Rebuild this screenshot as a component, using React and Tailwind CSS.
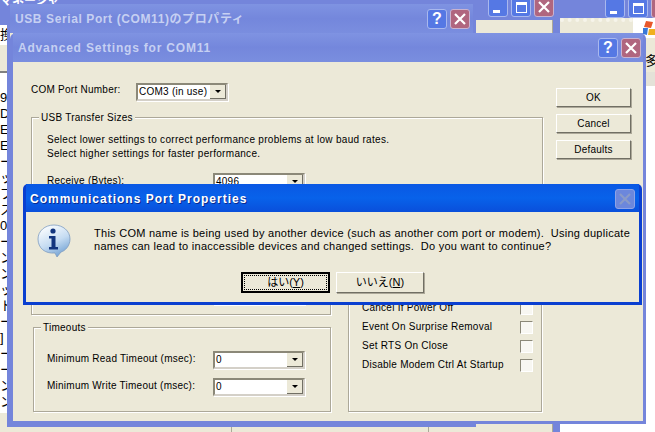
import React from "react";

const font = { fontFamily: '"Liberation Sans", "Noto Sans CJK JP", sans-serif' };

// xp style caption button
const CapButton = ({ kind, inactive }) => {
  const tone =
    kind === "close"
      ? "bg-[#b0667f] border-[#c9b3d0]"
      : "bg-[#5578e4] border-[#a9b8ee]";
  return (
    <div className={`w-[20px] h-[20px] rounded-[3px] border flex items-center justify-center shrink-0 ${inactive ? "bg-[#6c87dc] border-[#8fa3e6]" : tone}`}>
      {kind === "help" && <span className="text-white text-[16px] font-bold leading-none">?</span>}
      {kind === "close" && (
        <svg width="12" height="12" viewBox="0 0 12 12">
          <path d="M1 1 L11 11 M11 1 L1 11" stroke={inactive ? "#8a9bc8" : "#fff"} strokeWidth="2.2" />
        </svg>
      )}
      {kind === "min" && <div className="w-[7px] h-[3px] bg-white mt-[8px] mr-[4px]" />}
      {kind === "max" && <div className="w-[11px] h-[11px] border border-white border-t-[3px]" />}
    </div>
  );
};

const Select = ({ value, className = "w-[92px]" }) => (
  <div className={`h-[18px] flex bg-white border-2 border-t-[#8b8878] border-l-[#8b8878] border-r-[#d4d0c8] border-b-[#d4d0c8] shadow-[1px_1px_0_#fff] ${className}`}>
    <div className="flex-1 text-[10px] leading-[14px] pl-[1px] text-black overflow-hidden whitespace-nowrap tracking-[0.25px]">{value}</div>
    <div className="w-[16px] bg-[#ece9d8] border-r border-b border-[#716f64] flex items-center justify-center">
      <div className="w-0 h-0 border-x-[3px] border-x-transparent border-t-[3px] border-t-black" />
    </div>
  </div>
);

const Group = ({ label, className = "", children }) => (
  <div className={`relative border border-[#aca899] shadow-[inset_1px_1px_0_#fff,1px_1px_0_#fff] ${className}`}>
    {label && (
      <span className="absolute left-[7px] -top-[7px] bg-[#ece9d8] px-[2px] text-[10px] leading-[13px] tracking-[0.25px] whitespace-nowrap">
        {label}
      </span>
    )}
    {children}
  </div>
);

const SideButton = ({ children }) => (
  <div className="w-[75px] h-[19px] bg-[#ece9d8] border border-t-white border-l-white border-r-[#716f64] border-b-[#716f64] shadow-[1px_1px_0_#aca899] flex items-center justify-center text-[10px] tracking-[0.25px]">
    {children}
  </div>
);

const CheckRow = ({ label }) => (
  <div className="flex items-center justify-between h-[13px]">
    <span className="text-[10px] leading-[13px] mb-[3px] tracking-[0.25px] whitespace-nowrap">{label}</span>
    <div className="w-[13px] h-[13px] bg-[#f8f7f2] border border-t-[#8b8878] border-l-[#8b8878] border-r-white border-b-white" />
  </div>
);

const InfoIcon = () => (
  <svg width="34" height="34" viewBox="0 0 34 34" className="shrink-0">
    <defs>
      <linearGradient id="bub" x1="0.2" y1="0" x2="0.7" y2="1">
        <stop offset="0" stopColor="#ffffff" />
        <stop offset="0.55" stopColor="#c5dcf2" />
        <stop offset="1" stopColor="#6f9fd2" />
      </linearGradient>
    </defs>
    <path d="M17 1 C26 1 33 7 33 15 C33 22 28 27 24 28 L20 33 L18 29 C8 30 1 24 1 15 C1 7 8 1 17 1 Z" fill="url(#bub)" stroke="#7e9cc0" strokeWidth="0.8" />
    <circle cx="16" cy="7" r="2.6" fill="#12357e" />
    <path d="M12 12 H18.5 V23 H21 V25.5 H12 V23 H14.5 V14.5 H12 Z" fill="#12357e" />
  </svg>
);

// window that sits behind everything at the top of the desktop
const BackWindow = () => (
  <div className="absolute left-0 top-0 w-[560px] h-[432px] bg-[#7485db] flex flex-col overflow-hidden">
    <div className="h-[17px] shrink-0 flex justify-end gap-[3px] pr-[6px] items-end overflow-hidden relative">
      <span className="absolute left-0 -top-[8px] text-[12px] font-bold text-white whitespace-nowrap">マネージャ</span>
      <CapButton kind="min" />
      <CapButton kind="max" />
      <CapButton kind="close" />
    </div>
    <div className="h-[3px] shrink-0 bg-[#7485db]" />
    <div className="flex-1 mr-[7px] bg-[#ece9d8] border-r border-[#aca899] flex flex-col">
      <div className="h-[5px] w-[7px] bg-[#7485db]" />
      <div className="h-[20px] w-[7px] bg-white text-[13px] leading-[20px] text-black overflow-hidden">換</div>
      <div className="h-[28px] w-[7px] border-b-2 border-[#808080]" />
      <div className="h-[340px] w-[7px] bg-white text-[13px] leading-[16px] text-black overflow-hidden whitespace-nowrap pt-[17px]">
        {["9", "D", "E", "E", "ー", "ッ", "ブ", "ス", "0", "ー", "ン", "ン", "ッ", "ト", "ー", "]", "ー", "ー", "ン", "ン"].map((c, i) => (
          <div key={i}>{c}</div>
        ))}
      </div>
      <div className="flex-1 mt-[12px] flex">
        <div className="w-[232px] border-r border-[#aca899]" />
        <div className="w-[197px] border-r border-[#aca899]" />
      </div>
    </div>
  </div>
);

const RightWindow = () => (
  <div className="absolute left-[560px] top-0 w-[95px] h-[432px] bg-white flex flex-col overflow-hidden">
    <div className="h-[18px] shrink-0 bg-[#7485db] flex gap-[3px] pl-[45px] items-end">
      <CapButton kind="min" />
      <CapButton kind="max" />
      <CapButton kind="close" />
    </div>
    <div className="h-[20px] flex">
      <div className="w-[75px] bg-[#ece9d8] border-t-4 border-dotted border-[#f6f4ea]" />
      <div className="flex-1 bg-white pl-[10px] pt-[2px]">
        <svg width="12" height="16" viewBox="0 0 12 16">
          <path d="M3 1 L10 2 L8 8 L1 7 Z" fill="#e8572a" />
          <path d="M0 8 L5 8 L4 15 L0 14 Z" fill="#3a78d8" />
          <path d="M6 9 L12 9 L12 15 L5 15 Z" fill="#f0b020" />
        </svg>
      </div>
    </div>
    <div className="h-[14px] bg-[#ece9d8]" />
    <div className="h-[20px] bg-[#ece9d8] pl-[85px] text-[13px] leading-[18px] whitespace-nowrap overflow-hidden">多</div>
    <div className="h-[14px] bg-[#e4e2d8]" />
  </div>
);

const UsbWindow = () => (
  <div className="absolute left-[7px] top-[4px] w-[469px] h-[423px] rounded-t-[6px] bg-[#7485db] flex flex-col px-[3px] pb-[3px]">
    <div className="h-[29px] shrink-0 flex items-center justify-between pr-[3px] bg-gradient-to-b from-[#7f93e2] via-[#7487dc] to-[#7a8edf]">
      <span className="text-[#c6d0f2] font-bold text-[12px] tracking-[0.6px] pl-[5px] whitespace-nowrap">
        USB Serial Port (COM11)のプロパティ
      </span>
      <div className="flex gap-[3px]">
        <CapButton kind="help" />
        <CapButton kind="close" />
      </div>
    </div>
    <div className="flex-1 bg-[#ece9d8]" />
  </div>
);

const AdvancedWindow = () => (
  <div className="absolute left-[10px] top-[33px] w-[636px] h-[391px] rounded-t-[6px] bg-[#7485db] flex flex-col px-[3px] pb-[3px] text-black">
    <div className="h-[29px] shrink-0 flex items-center justify-between pr-[2px] bg-gradient-to-b from-[#7f93e2] via-[#7487dc] to-[#7a8edf]">
      <span className="text-[#c6d0f2] font-bold text-[12px] tracking-[0.8px] pl-[5px] whitespace-nowrap">
        Advanced Settings for COM11
      </span>
      <div className="flex gap-[3px]">
        <CapButton kind="help" />
        <CapButton kind="close" />
      </div>
    </div>
    <div className="flex-1 bg-[#ece9d8] flex pl-[18px] pt-[21px]">
      <div className="w-[512px] flex flex-col">
        <div className="flex h-[18px]">
          <span className="w-[105px] text-[10px] leading-[13px] tracking-[0.25px] whitespace-nowrap">COM Port Number:</span>
          <Select value="COM3 (in use)" />
        </div>
        <Group label="USB Transfer Sizes" className="mt-[16px] h-[110px] pl-[15px] pt-[15px]">
          <p className="text-[10px] leading-[14px] tracking-[0.3px] whitespace-nowrap">
            Select lower settings to correct performance problems at low baud rates.
          </p>
          <p className="text-[10px] leading-[14px] tracking-[0.3px] whitespace-nowrap">
            Select higher settings for faster performance.
          </p>
          <div className="flex mt-[12px]">
            <span className="w-[166px] text-[10px] leading-[16px] tracking-[0.25px]">Receive (Bytes):</span>
            <Select value="4096" />
          </div>
        </Group>
        <div className="flex mt-[5px]">
          <div className="w-[300px] flex flex-col">
            <Group className="h-[83px] pl-[181px] pt-[54px]">
              <Select value="16" />
            </Group>
            <Group label="Timeouts" className="mt-[12px] ml-[2px] h-[85px] pl-[13px] pt-[23px] flex flex-col gap-[9px]">
              <div className="flex">
                <span className="w-[166px] text-[10px] leading-[16px] tracking-[0.25px] whitespace-nowrap">Minimum Read Timeout (msec):</span>
                <Select value="0" />
              </div>
              <div className="flex">
                <span className="w-[166px] text-[10px] leading-[16px] tracking-[0.25px] whitespace-nowrap">Minimum Write Timeout (msec):</span>
                <Select value="0" />
              </div>
            </Group>
          </div>
          <Group className="ml-[17px] w-[194px] h-[180px] pl-[13px] pr-[8px] pt-[69px] flex flex-col gap-[6px]">
            <CheckRow label="Cancel If Power Off" />
            <CheckRow label="Event On Surprise Removal" />
            <CheckRow label="Set RTS On Close" />
            <CheckRow label="Disable Modem Ctrl At Startup" />
          </Group>
        </div>
      </div>
      <div className="ml-[13px] pt-[5px] flex flex-col gap-[7px]">
        <SideButton>OK</SideButton>
        <SideButton>Cancel</SideButton>
        <SideButton>Defaults</SideButton>
      </div>
    </div>
  </div>
);

const PortDialog = () => (
  <div className="absolute left-[23px] top-[184px] w-[619px] h-[121px] rounded-t-[5px] bg-[#0a3fd0] flex flex-col px-[3px] pb-[3px] text-black">
    <div className="h-[28px] shrink-0 pt-[2px] flex items-center justify-between pr-[4px] bg-gradient-to-b from-[#0a58e4] via-[#0862ea] to-[#0a4fdb]">
      <span className="text-white font-bold text-[12px] tracking-[1px] pl-[4px] whitespace-nowrap [text-shadow:1px_1px_0_#0a2a90]">
        Communications Port Properties
      </span>
      <CapButton kind="close" inactive />
    </div>
    <div className="flex-1 bg-[#ece9d8] flex pl-[11px] pt-[12px]">
      <InfoIcon />
      <div className="ml-[23px] flex flex-col">
        <div className="mt-[3px] text-[11px] tracking-[0.27px]">
          <p className="h-[13px] leading-[13px] whitespace-pre">This COM name is being used by another device (such as another com port or modem).  Using duplicate</p>
          <p className="h-[13px] leading-[13px] whitespace-pre">names can lead to inaccessible devices and changed settings.  Do you want to continue?</p>
        </div>
        <div className="flex gap-[6px] mt-[19px] ml-[147px]">
          <div className="w-[89px] h-[21px] border-2 border-black bg-[#ece9d8] p-[1px]">
            <div className="h-full border border-dotted border-black flex items-center justify-center text-[11px]">
              <span>はい(<u>Y</u>)</span>
            </div>
          </div>
          <div className="w-[88px] h-[21px] bg-[#ece9d8] border border-t-white border-l-white border-r-[#716f64] border-b-[#716f64] shadow-[1px_1px_0_#aca899] flex items-center justify-center text-[11px]">
            <span>いいえ(<u>N</u>)</span>
          </div>
        </div>
      </div>
    </div>
  </div>
);

export default function App() {
  return (
    <div className="relative w-[655px] h-[432px] overflow-hidden bg-white" style={font}>
      <BackWindow />
      <RightWindow />
      <UsbWindow />
      <AdvancedWindow />
      <PortDialog />
    </div>
  );
}
